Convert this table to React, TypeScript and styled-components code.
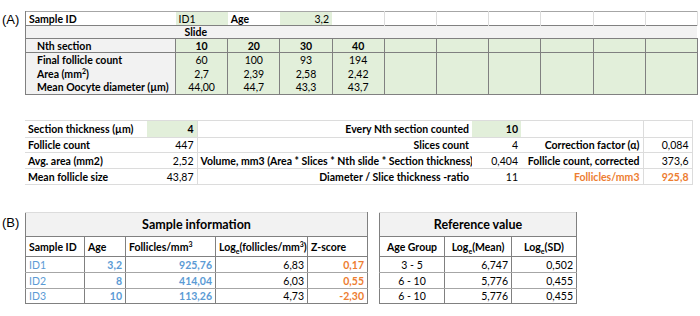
import React from 'react';
import styled, { createGlobalStyle } from 'styled-components';

const C = {
  green: '#e2efda',
  gray: '#f2f2f2',
  dark: '#808080',
  grid: '#dcdcdc',
  mid: '#a6a6a6',
  blue: '#5b9bd5',
  orange: '#ed7d31',
};

const Global = createGlobalStyle`
  html, body { margin: 0; padding: 0; background: #fff; }
  body {
    font-family: Lato, "Open Sans", sans-serif;
    font-size: 10.5px;
    color: #000;
  }
  sup, sub { font-size: 7px; line-height: 0; }
`;

const Page = styled.div`
  width: 700px;
  height: 316px;
  overflow: hidden;
  box-sizing: border-box;
  padding-top: 11px;
  display: flex;
  flex-direction: column;
`;

const Part = styled.section<{ $gap?: number }>`
  display: grid;
  grid-template-columns: 25px auto;
  margin-top: ${(p) => p.$gap ?? 0}px;
`;

const Tag = styled.div<{ $top: number }>`
  font-family: "Liberation Sans", Arial, sans-serif;
  font-size: 13px;
  line-height: 15px;
  padding-left: 2px;
  margin-top: ${(p) => p.$top}px;
`;

const Stack = styled.div`
  display: flex;
  flex-direction: column;
  gap: 25px;
`;

const Table = styled.table<{ $w: number }>`
  border-collapse: collapse;
  table-layout: fixed;
  width: ${(p) => p.$w}px;
`;

const Row = styled.tr<{ $h: number; $line?: string }>`
  height: ${(p) => p.$h}px;
  ${(p) => (p.$line ? `border-bottom: 1px solid ${p.$line};` : '')}
`;

type CellProps = {
  $bg?: string;
  $align?: 'left' | 'right' | 'center';
  $bold?: boolean;
  $color?: string;
  $pad?: number;
};

const Cell = styled.td<CellProps>`
  padding: 0 3px 0 ${(p) => p.$pad ?? 3}px;
  background: ${(p) => p.$bg ?? 'transparent'};
  text-align: ${(p) => p.$align ?? 'left'};
  font-weight: ${(p) => (p.$bold ? 700 : 400)};
  color: ${(p) => p.$color ?? '#000'};
  white-space: nowrap;
  overflow: hidden;
  line-height: 12px;
  vertical-align: middle;
`;

/* ---------- (A) slide table ---------- */
const SlideTable = styled(Table)`
  border-top: 1px solid ${C.mid};
`;
const SlideLabel = styled(Cell)`
  border-left: 1px solid ${C.dark};
  background: ${(p) => p.$bg ?? C.gray};
  font-weight: 700;
`;
const GreenCell = styled(Cell)`
  background: ${C.green};
  border-left: 1px solid ${C.dark};
  border-right: 1px solid ${C.dark};
  text-align: center;
`;
const BlankCell = styled(Cell)`
  border-right: 1px solid ${C.grid};
`;

/* ---------- (A) summary table ---------- */
const SumTable = styled(Table)`
  border-top: 1px solid ${C.grid};
`;
const SumLong = styled(Cell)`
  border-left: 1px solid ${C.grid};
  font-weight: 700;
  text-align: right;
`;
const SumEdge = styled(Cell)`
  border-right: 1px solid ${C.grid};
  text-align: right;
`;

/* ---------- (B) tables ---------- */
const BTable = styled(Table)``;
const BHead = styled(Cell)`
  background: ${C.gray};
  font-weight: 700;
  font-size: 12.5px;
  text-align: center;
  border: 1px solid ${C.dark};
  border-top: 1px solid ${C.grid};
`;
const BCol = styled(Cell)`
  font-weight: 700;
  border-left: 1px solid ${C.dark};
  border-right: 1px solid ${C.dark};
  border-bottom: 1px solid ${C.dark};
  vertical-align: bottom;
  padding-bottom: 3px;
`;
const BData = styled(Cell)<{ $last?: boolean }>`
  border-left: 1px solid ${C.dark};
  border-right: 1px solid ${C.dark};
  border-bottom: 1px solid ${(p) => (p.$last ? C.dark : C.mid)};
`;
const GapCell = styled.td`
  padding: 0;
  background: #fff;
`;

const slides = [
  { n: '10', count: '60', area: '2,7', diam: '44,00' },
  { n: '20', count: '100', area: '2,39', diam: '44,7' },
  { n: '30', count: '93', area: '2,58', diam: '43,3' },
  { n: '40', count: '194', area: '2,42', diam: '43,7' },
];
const DATA_COLS = 10;
const pad = <T,>(list: T[], n: number) =>
  Array.from({ length: n }, (_, i) => list[i]);

const samples = [
  { id: 'ID1', age: '3,2', fol: '925,76', log: '6,83', z: '0,17', group: '3 - 5', mean: '6,747', sd: '0,502' },
  { id: 'ID2', age: '8', fol: '414,04', log: '6,03', z: '0,55', group: '6 - 10', mean: '5,776', sd: '0,455' },
  { id: 'ID3', age: '10', fol: '113,26', log: '4,73', z: '-2,30', group: '6 - 10', mean: '5,776', sd: '0,455' },
];

export default function App() {
  const cols = pad(slides, DATA_COLS);
  return (
    <>
      <Global />
      <Page>
        <Part>
          <Tag $top={1}>(A)</Tag>
          <Stack>
            <SlideTable $w={672}>
              <colgroup>
                <col style={{ width: 150 }} />
                {cols.map((_, i) => (
                  <col key={i} style={{ width: 52.2 }} />
                ))}
              </colgroup>
              <tbody>
                <Row $h={14} $line={C.dark}>
                  <SlideLabel $bg="#fff">Sample ID</SlideLabel>
                  <Cell $bg={C.green}>ID1</Cell>
                  <Cell $bold>Age</Cell>
                  <Cell $bg={C.green} $align="right">3,2</Cell>
                  {Array.from({ length: 7 }, (_, i) => (
                    <BlankCell key={i} />
                  ))}
                </Row>
                <Row $h={13} $line={C.dark}>
                  <SlideLabel />
                  <Cell colSpan={DATA_COLS} $bg={C.gray} $bold $pad={9}>
                    Slide
                  </Cell>
                </Row>
                <Row $h={14} $line={C.dark}>
                  <SlideLabel $pad={11}>Nth section</SlideLabel>
                  {cols.map((s, i) => (
                    <GreenCell key={i} $bold>{s?.n}</GreenCell>
                  ))}
                </Row>
                <Row $h={14}>
                  <SlideLabel $pad={11}>Final follicle count</SlideLabel>
                  {cols.map((s, i) => (
                    <GreenCell key={i}>{s?.count}</GreenCell>
                  ))}
                </Row>
                <Row $h={14}>
                  <SlideLabel $pad={11}>
                    Area (mm<sup>2</sup>)
                  </SlideLabel>
                  {cols.map((s, i) => (
                    <GreenCell key={i}>{s?.area}</GreenCell>
                  ))}
                </Row>
                <Row $h={14} $line={C.dark}>
                  <SlideLabel $pad={11}>Mean Oocyte diameter (µm)</SlideLabel>
                  {cols.map((s, i) => (
                    <GreenCell key={i}>{s?.diam}</GreenCell>
                  ))}
                </Row>
              </tbody>
            </SlideTable>

            <SumTable $w={667}>
              <colgroup>
                <col style={{ width: 122 }} />
                <col style={{ width: 50 }} />
                <col style={{ width: 275 }} />
                <col style={{ width: 49 }} />
                <col style={{ width: 122 }} />
                <col style={{ width: 49 }} />
              </colgroup>
              <tbody>
                <Row $h={17} $line={C.grid}>
                  <Cell $bold>Section thickness (µm)</Cell>
                  <Cell $bg={C.green} $align="right" $bold>4</Cell>
                  <SumLong>Every Nth section counted</SumLong>
                  <Cell $bg={C.green} $align="right" $bold>10</Cell>
                  <SumEdge />
                  <SumEdge />
                </Row>
                <Row $h={15} $line={C.grid}>
                  <Cell $bold>Follicle count</Cell>
                  <Cell $align="right">447</Cell>
                  <SumLong>Slices count</SumLong>
                  <Cell $align="right">4</Cell>
                  <SumEdge $bold>Correction factor (α)</SumEdge>
                  <SumEdge>0,084</SumEdge>
                </Row>
                <Row $h={16} $line={C.grid}>
                  <Cell $bold>Avg. area (mm2)</Cell>
                  <Cell $align="right">2,52</Cell>
                  <SumLong>Volume, mm3 (Area * Slices * Nth slide * Section thickness)</SumLong>
                  <Cell $align="right">0,404</Cell>
                  <SumEdge $bold>Follicle count, corrected</SumEdge>
                  <SumEdge>373,6</SumEdge>
                </Row>
                <Row $h={16} $line={C.grid}>
                  <Cell $bold>Mean follicle size</Cell>
                  <Cell $align="right">43,87</Cell>
                  <SumLong>Diameter / Slice thickness -ratio</SumLong>
                  <Cell $align="right">11</Cell>
                  <SumEdge $bold $color={C.orange}>Follicles/mm3</SumEdge>
                  <SumEdge $bold $color={C.orange}>925,8</SumEdge>
                </Row>
              </tbody>
            </SumTable>
          </Stack>
        </Part>

        <Part $gap={27}>
          <Tag $top={3}>(B)</Tag>
          <BTable $w={551}>
            <colgroup>
              <col style={{ width: 59 }} />
              <col style={{ width: 41 }} />
              <col style={{ width: 90 }} />
              <col style={{ width: 92 }} />
              <col style={{ width: 60 }} />
              <col style={{ width: 12 }} />
              <col style={{ width: 65 }} />
              <col style={{ width: 67 }} />
              <col style={{ width: 65 }} />
            </colgroup>
            <tbody>
              <Row $h={24}>
                <BHead colSpan={5}>Sample information</BHead>
                <GapCell />
                <BHead colSpan={3}>Reference value</BHead>
              </Row>
              <Row $h={20}>
                <BCol>Sample ID</BCol>
                <BCol>Age</BCol>
                <BCol>
                  Follicles/mm<sup>3</sup>
                </BCol>
                <BCol>
                  Log<sub>e</sub>(follicles/mm<sup>3</sup>)
                </BCol>
                <BCol>Z-score</BCol>
                <GapCell />
                <BCol $align="center">Age Group</BCol>
                <BCol $align="center">
                  Log<sub>e</sub>(Mean)
                </BCol>
                <BCol $align="center">
                  Log<sub>e</sub>(SD)
                </BCol>
              </Row>
              {samples.map((s, i) => {
                const last = i === samples.length - 1;
                return (
                  <Row key={s.id} $h={i === 2 ? 15 : 16}>
                    <BData $last={last} $color={C.blue}>{s.id}</BData>
                    <BData $last={last} $color={C.blue} $bold $align="right">{s.age}</BData>
                    <BData $last={last} $color={C.blue} $bold $align="right">{s.fol}</BData>
                    <BData $last={last} $align="right">{s.log}</BData>
                    <BData $last={last} $color={C.orange} $bold $align="right">{s.z}</BData>
                    <GapCell />
                    <BData $last={last} $align="center">{s.group}</BData>
                    <BData $last={last} $align="right">{s.mean}</BData>
                    <BData $last={last} $align="right">{s.sd}</BData>
                  </Row>
                );
              })}
            </tbody>
          </BTable>
        </Part>
      </Page>
    </>
  );
}
